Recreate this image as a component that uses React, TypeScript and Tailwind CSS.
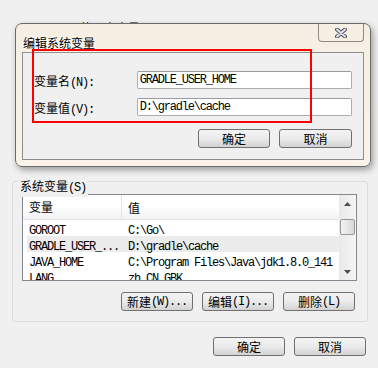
import React from 'react';

const cjk = "font-['Noto_Sans_CJK_SC',sans-serif] text-[12px] leading-[16px]";
const mono = "font-['Liberation_Mono',monospace] text-[12px] leading-[16px] tracking-[-1.2px] whitespace-pre";

// split mixed text so Chinese and Latin get their own font
const T: React.FC<{ s: string }> = ({ s }) => {
  const parts = s.split(/([\u4e00-\u9fff]+)/).filter(Boolean);
  return (
    <>
      {parts.map((p, i) =>
        /[\u4e00-\u9fff]/.test(p) ? (
          <span key={i} className={cjk}>{p}</span>
        ) : (
          <span key={i} className={mono}>{p}</span>
        )
      )}
    </>
  );
};

const Btn: React.FC<{ label: string; className?: string }> = ({ label, className = '' }) => (
  <div
    className={`flex items-center justify-center rounded-[3px] border border-[#707070] bg-linear-to-b from-[#f4f4f4] via-[#ebebeb] to-[#d3d3d3] text-black ${className}`}
  >
    <T s={label} />
  </div>
);

const rows = [
  { name: 'GOROOT', value: 'C:\\Go\\' },
  { name: 'GRADLE_USER_...', value: 'D:\\gradle\\cache', hl: true },
  { name: 'JAVA_HOME', value: 'C:\\Program Files\\Java\\jdk1.8.0_141' },
  { name: 'LANG', value: 'zh_CN.GBK' },
];

export default function App() {
  return (
    <div className="relative w-[378px] h-[368px] overflow-hidden bg-[#f0f0f0] text-black">
      {/* window behind the dialog */}
      <div className="h-[181px] pt-[15px] pl-[20px]">
        <T s="Windows 7 的用户变量(U)" />
      </div>

      {/* system variables group */}
      <div className="relative ml-[12px] w-[356px] h-[141px] rounded-[3px] border border-[#d5dfe5] pt-[12px] pl-[9px]">
        <div className="absolute left-[5px] -top-[9px] bg-[#f0f0f0] px-[2px]">
          <T s="系统变量(S)" />
        </div>

        <div className="flex w-[335px] h-[87px] border border-[#828790] bg-white">
          <div className="flex-1 flex flex-col overflow-hidden">
            <div className="flex h-[25px] shrink-0 items-center border-b border-[#e5e5e5] bg-linear-to-b from-white via-white to-[#f1f2f4]">
              <div className="w-[99px] h-full flex items-center pl-[6px] border-r border-[#e3e3e3]">
                <span className={cjk}>变量</span>
              </div>
              <div className="pl-[6px]">
                <span className={cjk}>值</span>
              </div>
            </div>
            {rows.map((r) => (
              <div
                key={r.name}
                className={`flex h-[16px] shrink-0 ml-[4px] items-center ${r.hl ? 'bg-[#ececec]' : ''}`}
              >
                <div className="w-[95px] pl-[2px]">
                  <T s={r.name} />
                </div>
                <div className="pl-[6px]">
                  <T s={r.value} />
                </div>
              </div>
            ))}
          </div>

          {/* scrollbar */}
          <div className="w-[17px] flex flex-col bg-linear-to-r from-[#e9e9e9] to-[#f5f5f5]">
            <div className="h-[17px] flex items-center justify-center">
              <svg width="7" height="4" viewBox="0 0 7 4">
                <path d="M0 4 L3.5 0 L7 4 Z" fill="#4d4d4d" />
              </svg>
            </div>
            <div className="mt-[7px] mx-[1px] h-[16px] rounded-[2px] border border-[#979797] bg-linear-to-r from-[#f3f3f3] to-[#d8d8d8]" />
            <div className="flex-1" />
            <div className="h-[17px] flex items-center justify-center">
              <svg width="7" height="4" viewBox="0 0 7 4">
                <path d="M0 0 L3.5 4 L7 0 Z" fill="#4d4d4d" />
              </svg>
            </div>
          </div>
        </div>

        <div className="flex justify-end gap-[9px] mt-[11px] pr-[12px]">
          <Btn label="新建(W)..." className="w-[72px] h-[19px]" />
          <Btn label="编辑(I)..." className="w-[72px] h-[19px]" />
          <Btn label="删除(L)" className="w-[72px] h-[19px]" />
        </div>
      </div>

      <div className="flex justify-end gap-[9px] mt-[15px] pr-[12px]">
        <Btn label="确定" className="w-[72px] h-[19px]" />
        <Btn label="取消" className="w-[72px] h-[19px]" />
      </div>

      {/* edit dialog */}
      <div className="absolute left-[15px] top-[23px] w-[356px] h-[144px] rounded-[7px] border border-[#6b6b6b] bg-linear-to-b from-[#f7eee3] to-[#fbf3ea] shadow-[2px_3px_6px_rgba(0,0,0,0.35)]">
        <div className="flex h-[28px] justify-between pl-[7px] pr-[6px]">
          <div className="mt-[6px] [text-shadow:0_0_6px_#fff,0_0_3px_#fff]">
            <span className={cjk}>编辑系统变量</span>
          </div>
          <div className="w-[46px] h-[18px] rounded-b-[4px] border border-t-0 border-[#8f8a84] bg-[#f8efe4] flex items-center justify-center">
            <svg width="12" height="10" viewBox="0 0 12 10">
              <path d="M2 1.5 L10 8.5 M10 1.5 L2 8.5" stroke="#4a5060" strokeWidth="4" strokeLinecap="round" />
              <path d="M2 1.5 L10 8.5 M10 1.5 L2 8.5" stroke="#e4e7ee" strokeWidth="2" strokeLinecap="round" />
            </svg>
          </div>
        </div>

        <div className="mx-[6px] h-[108px] border border-[#8e8e8e] bg-[#f0f0f0] pt-[18px] pl-[11px] pr-[11px]">
          <div className="flex items-center h-[18px]">
            <div className="w-[103px]">
              <T s="变量名(N):" />
            </div>
            <div className="w-[216px] h-[18px] flex items-center pl-[2px] rounded-[2px] border border-[#abadb3] border-t-[#9a9ca3] bg-white">
              <T s="GRADLE_USER_HOME" />
            </div>
          </div>
          <div className="flex items-center h-[18px] mt-[9px]">
            <div className="w-[103px]">
              <T s="变量值(V):" />
            </div>
            <div className="w-[216px] h-[18px] flex items-center pl-[2px] rounded-[2px] border border-[#abadb3] border-t-[#9a9ca3] bg-white">
              <T s="D:\gradle\cache" />
            </div>
          </div>
          <div className="flex justify-end gap-[9px] mt-[13px]">
            <Btn label="确定" className="w-[72px] h-[19px]" />
            <Btn label="取消" className="w-[73px] h-[19px]" />
          </div>
        </div>

        {/* red annotation box */}
        <div className="absolute left-[16px] top-[25px] w-[280px] h-[74px] border-2 border-[#ff0000]" />
      </div>
    </div>
  );
}
